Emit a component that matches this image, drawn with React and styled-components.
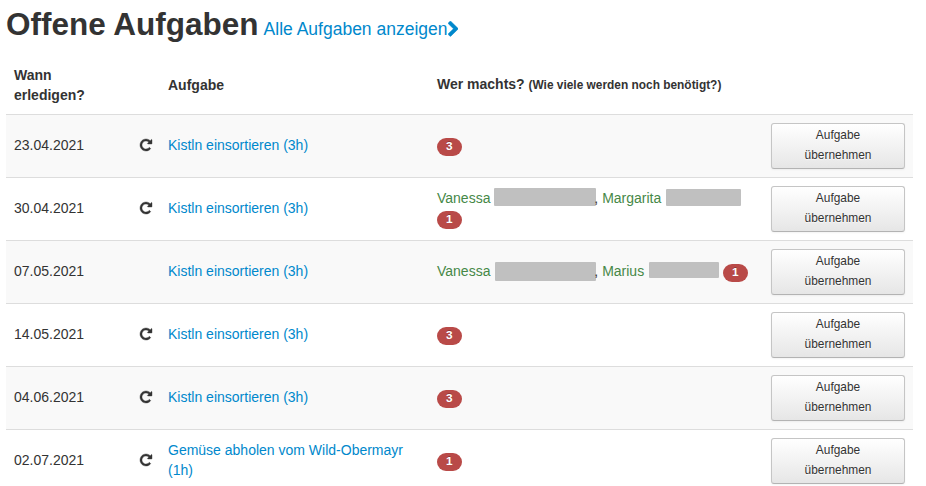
import React from 'react';
import styled, { createGlobalStyle } from 'styled-components';

const GlobalStyle = createGlobalStyle`
  body {
    margin: 0;
    background: #fff;
    color: #333;
    font: 14px/20px "Liberation Sans", Arial, sans-serif;
    overflow: hidden;
  }
`;

const Page = styled.main`
  width: 907px;
  margin-left: 6px;
  padding-top: 4px;
`;

const Heading = styled.h2`
  margin: 0 0 20px;
  height: 40px;
  font-size: 31.5px;
  line-height: 40px;
  font-weight: bold;
  white-space: nowrap;
`;

const HeadingLink = styled.a`
  margin-left: 5px;
  color: #0088cc;
  font-size: 17.5px;
  line-height: 20px;
  font-weight: normal;
  text-decoration: none;
`;

const Chevron = styled.svg`
  width: 10.5px;
  height: 15.5px;
  vertical-align: -1.5px;
  fill: currentColor;
  stroke: currentColor;
  stroke-width: 50;
  stroke-linejoin: round;
`;

const Table = styled.table`
  width: 100%;
  table-layout: fixed;
  border-collapse: collapse;
  border-spacing: 0;
`;

const HeadCell = styled.th`
  height: 40px;
  padding: ${(p) => (p.$withNote ? '0 8px 10px' : '1px 8px 9px')};
  text-align: left;
  vertical-align: middle;
`;

const Note = styled.small`
  font-size: 11.9px;
`;

const Row = styled.tr`
  height: 63px;
  background: ${(p) => (p.$striped ? '#f9f9f9' : '#fff')};
`;

const Cell = styled.td`
  padding: 7px 8px 9px;
  border-top: 1px solid #ddd;
  vertical-align: middle;
`;

const PeopleCell = styled(Cell)`
  padding-right: 0;
`;

const ActionCell = styled(Cell)`
  padding: 8px;
`;

const RepeatIcon = styled.svg`
  display: block;
  width: 12px;
  height: 12px;
  margin-left: 1px;
  overflow: visible;
  fill: #333;
  stroke: #333;
  stroke-width: 50;
`;

const TaskLink = styled.a`
  color: #0088cc;
  text-decoration: none;
`;

const Person = styled.span`
  color: #468847;
`;

const Redacted = styled.span`
  display: inline-block;
  width: ${(p) => p.$width}px;
  height: ${(p) => p.$height}px;
  margin: -4px ${(p) => p.$after || 0}px -4px ${(p) => p.$before || 0}px;
  vertical-align: ${(p) => p.$drop}px;
  border-radius: 1px;
  background: #c0c0c0;
`;

const Badge = styled.span`
  display: inline-block;
  padding: 1px 9px 3px;
  margin-bottom: -1px;
  border-radius: 9px;
  background: #b94a48;
  color: #fff;
  font-size: 11.844px;
  line-height: 14px;
  font-weight: bold;
  text-shadow: 0 -1px 0 rgba(0, 0, 0, 0.25);
  vertical-align: baseline;
`;

const TakeButton = styled.button`
  display: block;
  box-sizing: border-box;
  width: 134px;
  height: 46px;
  padding: 1px 10px 3px;
  border: 1px solid #ccc;
  border-color: #c5c5c5 #c5c5c5 #b3b3b3;
  border-radius: 3px;
  background: linear-gradient(to bottom, #fff, #e6e6e6);
  box-shadow: inset 0 1px 0 rgba(255, 255, 255, 0.2), 0 1px 2px rgba(0, 0, 0, 0.05);
  color: #333;
  font: 11.9px/20px "Liberation Sans", Arial, sans-serif;
  text-align: center;
  text-shadow: 0 1px 1px rgba(255, 255, 255, 0.75);
`;

const tasks = [
  { date: '23.04.2021', repeat: true, name: 'Kistln einsortieren (3h)', needed: 3 },
  {
    date: '30.04.2021', repeat: true, name: 'Kistln einsortieren (3h)', needed: 1,
    people: [
      { name: 'Vanessa', bar: { $width: 102, $height: 18, $drop: 1, $after: -2 } },
      { name: 'Margarita', bar: { $width: 75, $height: 17, $drop: 1, $before: 0.5 } },
    ],
  },
  {
    date: '07.05.2021', repeat: false, name: 'Kistln einsortieren (3h)', needed: 1,
    people: [
      { name: 'Vanessa', bar: { $width: 101, $height: 19, $drop: -1, $before: 1, $after: -2 } },
      { name: 'Marius', bar: { $width: 70, $height: 16, $drop: 2, $before: 1 } },
    ],
  },
  { date: '14.05.2021', repeat: true, name: 'Kistln einsortieren (3h)', needed: 3 },
  { date: '04.06.2021', repeat: true, name: 'Kistln einsortieren (3h)', needed: 3 },
  { date: '02.07.2021', repeat: true, name: 'Gemüse abholen vom Wild-Obermayr (1h)', needed: 1 },
];

const Repeat = () => (
  <RepeatIcon viewBox="0 0 1536 1536" aria-hidden="true">
    <path d="M1536 128v448q0 26-19 45t-45 19h-448q-42 0-59-40-17-39 14-69l138-138Q969 256 768 256q-104 0-198.500 40.500T406 406 296.500 569.500 256 768t40.500 198.500T406 1130t163.500 109.500T768 1280q119 0 225-52t179-147q7-10 23-12 15 0 25 9l137 138q9 8 9.500 20.500t-7.500 22.500q-109 132-264 204.500T768 1536q-156 0-298-61t-245-164-164-245T0 768t61-298 164-245T470 61 768 0q147 0 284.500 55.500T1297 212l130-129q29-31 70-14 39 17 39 59z" />
  </RepeatIcon>
);

export default function App() {
  return (
    <>
      <GlobalStyle />
      <Page>
        <Heading>
          Offene Aufgaben
          <HeadingLink>
            Alle Aufgaben anzeigen
            <Chevron viewBox="90 -95 1060 1610" aria-hidden="true">
              <path d="M1107 755l-742 726q-19 19-45 19t-45-19l-166-166q-19-19-19-45t19-45l531-515-531-515q-19-19-19-45t19-45l166-166q19-19 45-19t45 19l742 726q19 19 19 45t-19 45z" />
            </Chevron>
          </HeadingLink>
        </Heading>
        <Table>
          <colgroup>
            <col width="125" />
            <col width="29" />
            <col width="269" />
            <col width="334" />
            <col width="150" />
          </colgroup>
          <thead>
            <tr>
              <HeadCell>Wann<br />erledigen?</HeadCell>
              <HeadCell />
              <HeadCell>Aufgabe</HeadCell>
              <HeadCell $withNote>Wer machts? <Note>(Wie viele werden noch benötigt?)</Note></HeadCell>
              <HeadCell />
            </tr>
          </thead>
          <tbody>
            {tasks.map((task, i) => (
              <Row key={task.date} $striped={i % 2 === 0}>
                <Cell>{task.date}</Cell>
                <Cell>{task.repeat && <Repeat />}</Cell>
                <Cell><TaskLink>{task.name}</TaskLink></Cell>
                <PeopleCell>
                  {task.people?.map((person, n) => (
                    <React.Fragment key={person.name}>
                      {n > 0 && ', '}
                      <Person>{person.name} <Redacted {...person.bar} /></Person>
                    </React.Fragment>
                  ))}
                  {' '}
                  <Badge>{task.needed}</Badge>
                </PeopleCell>
                <ActionCell><TakeButton>Aufgabe<br />übernehmen</TakeButton></ActionCell>
              </Row>
            ))}
          </tbody>
        </Table>
      </Page>
    </>
  );
}
